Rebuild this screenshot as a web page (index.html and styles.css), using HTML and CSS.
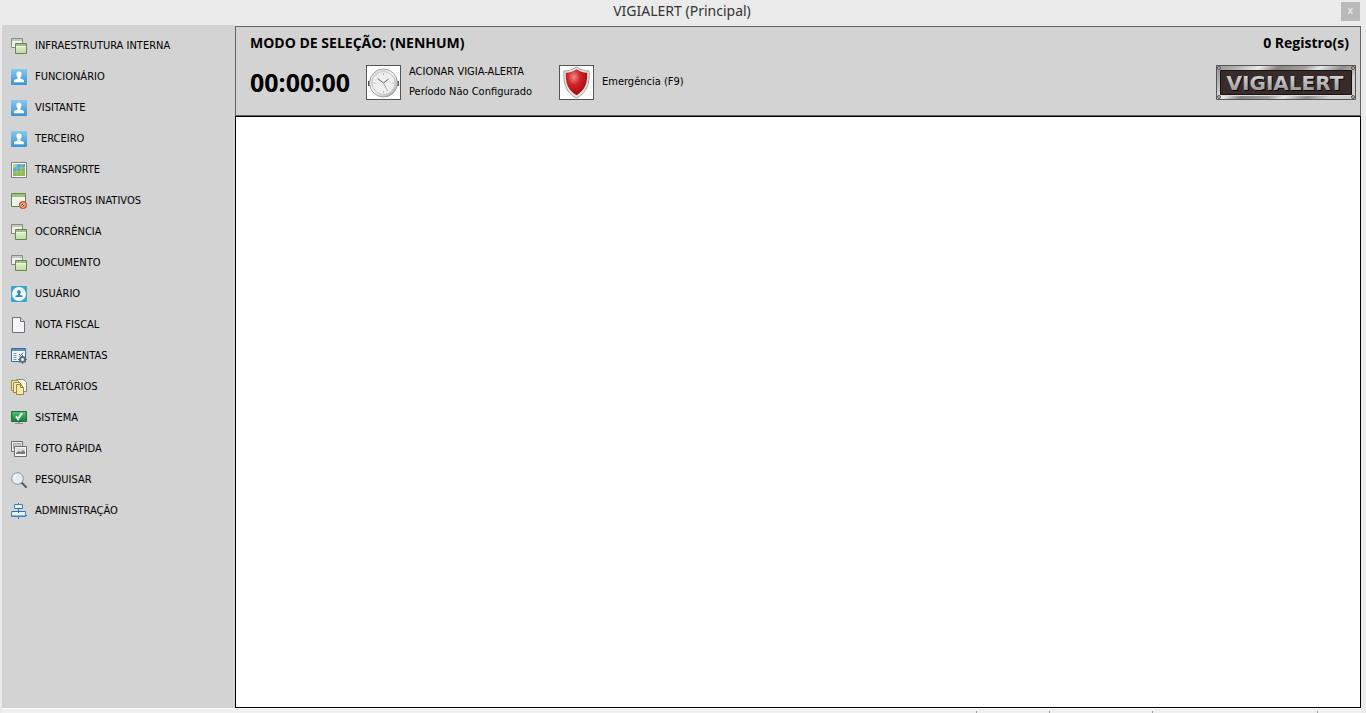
FILE: index.html
```
<!DOCTYPE html>
<html lang="pt-BR">
<head>
  <meta charset="UTF-8" />
  <meta name="viewport" content="width=device-width, initial-scale=1.0"/>
  <link rel="stylesheet" href="styles.css">
  <title>VIGIALERT (Principal)</title>
</head>
<body>
  <!-- Desenhos compartilhados pelos itens do menu -->
  <svg class="sprite" aria-hidden="true">
    <defs>
      <linearGradient id="azul" x1="0" y1="0" x2="0" y2="1">
        <stop offset="0" stop-color="#86c8f0"/><stop offset="1" stop-color="#3a93d6"/>
      </linearGradient>
      <linearGradient id="verde" x1="0" y1="0" x2="0" y2="1">
        <stop offset="0" stop-color="#edf6e0"/><stop offset="1" stop-color="#bfdda2"/>
      </linearGradient>
      <linearGradient id="monitor" x1="0" y1="0" x2="0" y2="1">
        <stop offset="0" stop-color="#4fc477"/><stop offset="1" stop-color="#138038"/>
      </linearGradient>
    </defs>
    <symbol id="janelas" viewBox="0 0 16 16">
      <path d="M.5.5h11v9H.5z" fill="#eef0ee" stroke="#858b85"/>
      <path d="M1 1h10v2H1z" fill="#c3c8c3"/>
      <path d="M4.500 5.500h11v10h-11z" fill="url(#verde)" stroke="#64874c"/>
      <path d="M5 6h10v2H5z" fill="#9dc07c"/>
      <path d="M5 8.500h10" stroke="#f5fbee"/>
    </symbol>
    <symbol id="pessoa" viewBox="0 0 16 16">
      <rect width="16" height="16" rx="1" fill="url(#azul)"/>
      <path d="M8 2.500c2 0 2.800 1.300 2.600 3.100-.1 1.200-.6 2-1.200 2.600v1.200l3.600 1.500v2.300H3v-2.300l3.600-1.500V8.200C6 7.600 5.500 6.800 5.400 5.600 5.200 3.800 6 2.500 8 2.500z" fill="#fff"/>
    </symbol>
    <symbol id="mapa" viewBox="0 0 16 16">
      <path d="M.5.5h15v15H.5z" fill="#fff" stroke="#7b8187"/>
      <path d="M2 2h12v12H2z" fill="#58a5dc"/>
      <path d="M2 10l3-2 3 1 2-3 4-2v10H2z" fill="#8dba4e"/>
      <path d="M2 2h4l-1 3-3 1zM10 2h2l-1 2z" fill="#b5d36b"/>
      <path d="M6 2v12M10 2v12M2 6h12M2 10h12" stroke="#fff" stroke-opacity=".2"/>
    </symbol>
    <symbol id="inativo" viewBox="0 0 16 16">
      <path d="M.5.5h14v13H.5z" fill="#f1f5ed" stroke="#64874c"/>
      <path d="M1 1h13v3H1z" fill="#9dc07c"/>
      <circle cx="12" cy="12" r="4" fill="#d8502c"/>
      <circle cx="12" cy="12" r="2.200" fill="none" stroke="#f7cdbb"/>
      <path d="M10.500 13.500l3-3" stroke="#fbe5dc"/>
    </symbol>
    <symbol id="usuario" viewBox="0 0 16 16">
      <rect width="16" height="16" rx="1" fill="#36a7cf"/>
      <circle cx="8" cy="8" r="7" fill="#f6fbfd"/>
      <path d="M8 4c1.400 0 2 1 1.800 2.200-.1.900-.5 1.300-.8 1.700v.9l2.500 1V11h-7V9.800l2.500-1v-.9c-.3-.4-.7-.8-.8-1.700C6 5 6.600 4 8 4z" fill="#2d8fb9"/>
    </symbol>
    <symbol id="folha" viewBox="0 0 16 16">
      <path d="M1.500.5h8l4 4v11h-12z" fill="#f7f7f9" stroke="#6f6f76"/>
      <path d="M9.500.5v4h4" fill="#d9d9df" stroke="#6f6f76"/>
    </symbol>
    <symbol id="ferramentas" viewBox="0 0 16 16">
      <path d="M.5.5h14v13H.5z" fill="#f3f8fc" stroke="#386c9b"/>
      <path d="M1 1h13v2H1z" fill="#5790c2"/>
      <path d="M2.500 5.500h3M2.500 7.500h3M2.500 9.500h3M2.500 11.500h3" stroke="#7095b6"/>
      <path d="M8 6l1.500 1.500L12 4.500" fill="none" stroke="#44627d"/>
      <circle cx="11.500" cy="11.500" r="2.500" fill="none" stroke="#5c7080" stroke-width="2"/>
      <path d="M11.500 7v2M11.500 14v2M7 11.500h2M14 11.500h2M8.500 8.500l1 1M13.500 13.500l1 1M8.500 14.500l1-1M13.500 9.500l1-1" stroke="#5c7080"/>
    </symbol>
    <symbol id="relatorios" viewBox="0 0 16 16">
      <g fill="#f7ebb5" stroke="#a38731">
        <path d="M5.500.5h7l3 3v9h-10z" fill="#fbfaf4" stroke="#8f8a78"/>
        <path d="M.5 1.500h6l2 2v8h-8z"/>
        <path d="M2.500 3.500h6l2 2v8h-8z"/>
        <path d="M5.500 5.500h4l3 3v7h-7z"/>
        <path d="M9.500 5.500v3h3" fill="none"/>
      </g>
    </symbol>
    <symbol id="sistema" viewBox="0 0 16 16">
      <path d="M.5 1.500h15v10H.5z" fill="url(#monitor)" stroke="#236a3a"/>
      <path d="M5 6.500l2 2.500 4-6" fill="none" stroke="#fff" stroke-width="2"/>
      <path d="M7 12h2v1h3v1H4v-1h3z" fill="#8b9892"/>
    </symbol>
    <symbol id="fotos" viewBox="0 0 16 16">
      <g fill="#f3f3f3" stroke="#707070">
        <path d="M.5.5h11v10H.5z"/>
        <path d="M2.500 2.500h7v5h-7z" fill="#c9c9c9" stroke="#a9a9a9"/>
        <path d="M3.500 5.500h12v10h-12z"/>
      </g>
      <path d="M5 7h9v6H5z" fill="#dcdcdc"/>
      <path d="M5 13v-1l3-2 2 1 2-2 2 2v2z" fill="#7b7b7b"/>
    </symbol>
    <symbol id="lupa" viewBox="0 0 16 16">
      <path d="M10.500 10.500l4.500 4.500" stroke="#55585d" stroke-width="2" stroke-linecap="round"/>
      <circle cx="6.500" cy="6.500" r="5.800" fill="#e3edf8" stroke="#8a93a1"/>
      <path d="M3 6.500A3.500 3.500 0 0 1 6.500 3" fill="none" stroke="#fff" stroke-width="1.500"/>
    </symbol>
    <symbol id="organograma" viewBox="0 0 16 16">
      <path d="M7.500 0v16M0 12.500h16" stroke="#44708f"/>
      <g fill="#e6f3fb" stroke="#3f82b5">
        <path d="M3.500 1.500h8v4h-8z"/>
        <path d="M.5 8.500h14v5H.5z"/>
      </g>
      <path d="M1 8.500h13M4 5.500h7M7.500 6v4" stroke="#3373a5"/>
      <path d="M1 12h13v1H1z" fill="#83b7dc"/>
    </symbol>
  </svg>

  <div class="window">
    <header class="title-bar">
      <h1 class="window-title">VIGIALERT (Principal)</h1>
      <button class="close-button" type="button" aria-label="Fechar">x</button>
    </header>

    <div class="window-body">
      <nav class="sidebar">
        <button class="menu-item" type="button"><svg class="icon"><use href="#janelas"/></svg>INFRAESTRUTURA INTERNA</button>
        <button class="menu-item" type="button"><svg class="icon"><use href="#pessoa"/></svg>FUNCIONÁRIO</button>
        <button class="menu-item" type="button"><svg class="icon"><use href="#pessoa"/></svg>VISITANTE</button>
        <button class="menu-item" type="button"><svg class="icon"><use href="#pessoa"/></svg>TERCEIRO</button>
        <button class="menu-item" type="button"><svg class="icon"><use href="#mapa"/></svg>TRANSPORTE</button>
        <button class="menu-item" type="button"><svg class="icon"><use href="#inativo"/></svg>REGISTROS INATIVOS</button>
        <button class="menu-item" type="button"><svg class="icon"><use href="#janelas"/></svg>OCORRÊNCIA</button>
        <button class="menu-item" type="button"><svg class="icon"><use href="#janelas"/></svg>DOCUMENTO</button>
        <button class="menu-item" type="button"><svg class="icon"><use href="#usuario"/></svg>USUÁRIO</button>
        <button class="menu-item" type="button"><svg class="icon"><use href="#folha"/></svg>NOTA FISCAL</button>
        <button class="menu-item" type="button"><svg class="icon"><use href="#ferramentas"/></svg>FERRAMENTAS</button>
        <button class="menu-item" type="button"><svg class="icon"><use href="#relatorios"/></svg>RELATÓRIOS</button>
        <button class="menu-item" type="button"><svg class="icon"><use href="#sistema"/></svg>SISTEMA</button>
        <button class="menu-item" type="button"><svg class="icon"><use href="#fotos"/></svg>FOTO RÁPIDA</button>
        <button class="menu-item" type="button"><svg class="icon"><use href="#lupa"/></svg>PESQUISAR</button>
        <button class="menu-item" type="button"><svg class="icon"><use href="#organograma"/></svg>ADMINISTRAÇÃO</button>
      </nav>

      <main class="content">
        <section class="panel">
          <div class="panel-row">
            <h2 class="panel-title">MODO DE SELEÇÃO: (NENHUM)</h2>
            <span class="panel-title record-count">0 Registro(s)</span>
          </div>
          <div class="panel-row tools">
            <div class="timer">00:00:00</div>
            <button class="tool-button" type="button" aria-labelledby="alerta-texto">
              <svg class="tool-icon" viewBox="0 0 33 33">
                <defs>
                  <linearGradient id="aro" x1="0" y1="0" x2="1" y2="1">
                    <stop offset="0" stop-color="#d5d5d5"/><stop offset=".5" stop-color="#f7f7f7"/><stop offset="1" stop-color="#999"/>
                  </linearGradient>
                </defs>
                <path d="M2 15v5M31 15v5" stroke="#555" stroke-width="2"/>
                <circle cx="16.500" cy="17" r="14" fill="url(#aro)" stroke="#a2a2a2"/>
                <circle cx="16.500" cy="17" r="11.500" fill="#efefef" stroke="#c4c4c4"/>
                <path d="M16.500 7v2M16.500 25v2M6.500 17h2M24.500 17h2" stroke="#bbb"/>
                <path d="M10.500 12.500l6 4.500 5-4" fill="none" stroke="#666"/>
                <path d="M16.500 17l4 8" stroke="#aaa"/>
              </svg>
            </button>
            <div class="tool-text alert-text" id="alerta-texto">
              <span>ACIONAR VIGIA-ALERTA</span>
              <span>Período Não Configurado</span>
            </div>
            <button class="tool-button" type="button" aria-labelledby="emergencia-texto">
              <svg class="tool-icon" viewBox="0 0 33 33">
                <defs>
                  <radialGradient id="escudo" cx=".38" cy=".3" r=".75">
                    <stop offset="0" stop-color="#f08a86"/><stop offset=".4" stop-color="#cf2529"/><stop offset="1" stop-color="#9c060b"/>
                  </radialGradient>
                </defs>
                <path d="M16.500.8c3.500 2.800 7.500 4.200 12.500 4.200 1 11.500-1.500 21.500-12.500 27C5.500 26.500 3 16.500 4 5 9 5 13 3.600 16.500.8z" fill="#e8e8e8" stroke="#a0a0a0"/>
                <path d="M16.500 3.300c3.200 2.300 6.500 3.300 10.700 3.500.4 9.900-1.900 17.700-10.700 22.400C7.700 24.500 5.400 16.700 5.800 6.800 10 6.600 13.300 5.600 16.500 3.300z" fill="url(#escudo)"/>
              </svg>
            </button>
            <span class="tool-text" id="emergencia-texto">Emergência (F9)</span>
            <div class="brand">
              <svg class="brand-frame" width="140" height="35" viewBox="0 0 140 35">
                <defs>
                  <linearGradient id="metal" x1="0" y1="0" x2="1" y2=".3">
                    <stop offset="0" stop-color="#999"/><stop offset=".12" stop-color="#aaa"/><stop offset=".3" stop-color="#e8e8e8"/><stop offset=".42" stop-color="#858585"/>
                    <stop offset=".6" stop-color="#a0a0a0"/><stop offset=".7" stop-color="#e5e5e5"/><stop offset=".85" stop-color="#8c8c8c"/><stop offset="1" stop-color="#cfcfcf"/>
                  </linearGradient>
                  <linearGradient id="letras" x1="0" y1="0" x2="0" y2="1">
                    <stop offset="0" stop-color="#e2e2e2"/><stop offset="1" stop-color="#8d8d8d"/>
                  </linearGradient>
                </defs>
                <path d="M.5.5h139v34H.5z" fill="url(#metal)" stroke="#555"/>
                <path d="M4.500 5.500h131v24h-131z" fill="#382b29" stroke="#181313"/>
                <path d="M4.500 30.500h131" stroke="#ddd"/>
                <g fill="#bbb" stroke="#555">
                  <circle cx="3" cy="3" r="1.500"/><circle cx="137" cy="3" r="1.500"/>
                  <circle cx="3" cy="32" r="1.500"/><circle cx="137" cy="32" r="1.500"/>
                </g>
                <text class="brand-shadow" x="70" y="26" text-anchor="middle" aria-hidden="true">VIGIALERT</text>
                <text class="brand-name" x="69" y="25" text-anchor="middle">VIGIALERT</text>
              </svg>
            </div>
          </div>
        </section>
        <section class="records"></section>
      </main>
    </div>

    <footer class="status-bar">
      <span class="status-cell status-main"></span>
      <span class="status-cell status-user"></span>
      <span class="status-cell status-date"></span>
      <span class="status-cell status-info"></span>
    </footer>
  </div>
</body>
</html>
```
FILE: styles.css
```
* {
  box-sizing: border-box;
}

:root {
  --window-bg: #ebebeb;
  --panel-bg: #d3d3d3;
  --panel-border: #646464;
  --text-color: #000000;
}

body {
  margin: 0;
  background: var(--window-bg);
  color: var(--text-color);
  font-family: Tahoma, 'DejaVu Sans Condensed', sans-serif;
  font-size: 11px;
}

h1, h2 {
  margin: 0;
}

button {
  border: none;
  padding: 0;
  color: inherit;
  font: inherit;
  cursor: pointer;
}

.sprite {
  position: absolute;
  width: 0;
  height: 0;
}

.window {
  display: flex;
  flex-direction: column;
  min-height: 100vh;
}

/* Barra de título */
.title-bar {
  display: grid;
  grid-template-columns: 1fr auto 1fr;
  align-items: center;
  height: 25px;
  padding: 0 6px 3px 4px;
}

.window-title {
  grid-column: 2;
  color: #333333;
  font-family: 'Segoe UI', 'Noto Sans', sans-serif;
  font-size: 14px;
  font-weight: 400;
  line-height: 20px;
}

.close-button {
  justify-self: end;
  width: 19px;
  height: 19px;
  background: #b9b9b9;
  color: #f4f4f4;
  line-height: 16px;
}

.window-body {
  display: flex;
  flex: 1;
  padding: 0 5px 0 2px;
}

/* Menu lateral */
.sidebar {
  flex: 0 0 233px;
  padding-top: 5px;
  background: var(--panel-bg);
}

.menu-item {
  display: flex;
  align-items: center;
  gap: 8px;
  width: 100%;
  height: 31px;
  padding-left: 9px;
  background: none;
  line-height: 14px;
  text-align: left;
}

.icon {
  flex: none;
  width: 16px;
  height: 16px;
}

/* Painel superior */
.content {
  display: flex;
  flex: 1;
  flex-direction: column;
  min-width: 0;
  padding-top: 1px;
}

.panel {
  height: 90px;
  padding: 0 4px 0 14px;
  border: 1px solid var(--panel-border);
  background: var(--panel-bg);
}

.panel-row {
  display: flex;
  align-items: center;
  justify-content: space-between;
  height: 30px;
}

.panel-title {
  font-family: 'Trebuchet MS', 'Open Sans', sans-serif;
  font-size: 14px;
  font-weight: 700;
}

.record-count {
  padding-right: 7px;
}

.tools {
  justify-content: flex-start;
  height: 50px;
}

.timer {
  width: 116px;
  font-family: 'Trebuchet MS', 'Open Sans', sans-serif;
  font-size: 25px;
  font-weight: 700;
  line-height: 32px;
}

.tool-button {
  flex: none;
  width: 35px;
  height: 35px;
  border: 1px solid #555555;
  background: #ffffff;
}

.tool-icon {
  display: block;
  width: 33px;
  height: 33px;
}

.tool-text {
  padding-left: 8px;
  line-height: 20px;
  white-space: nowrap;
}

.alert-text {
  display: flex;
  flex-direction: column;
  width: 158px;
}

.brand {
  margin-left: auto;
}

.brand-frame {
  display: block;
}

.brand-name,
.brand-shadow {
  font-family: 'DejaVu Sans', sans-serif;
  font-size: 20px;
  font-weight: 700;
}

.brand-name {
  fill: url(#letras);
}

.brand-shadow {
  fill: #0c0808;
}

.records {
  flex: 1;
  border: 1px solid #000000;
  background: #ffffff;
}

/* Barra de status */
.status-bar {
  display: flex;
  height: 5px;
  margin: 0 5px 0 2px;
  padding-top: 2px;
  border-top: 1px solid #ffffff;
  background: #f0f0f0;
}

.status-cell {
  border-right: 1px solid #a0a0a0;
}

.status-main {
  flex: 1;
}

.status-user {
  width: 73px;
}

.status-date {
  width: 103px;
}

.status-info {
  width: 165px;
  margin-right: 43px;
}
```
